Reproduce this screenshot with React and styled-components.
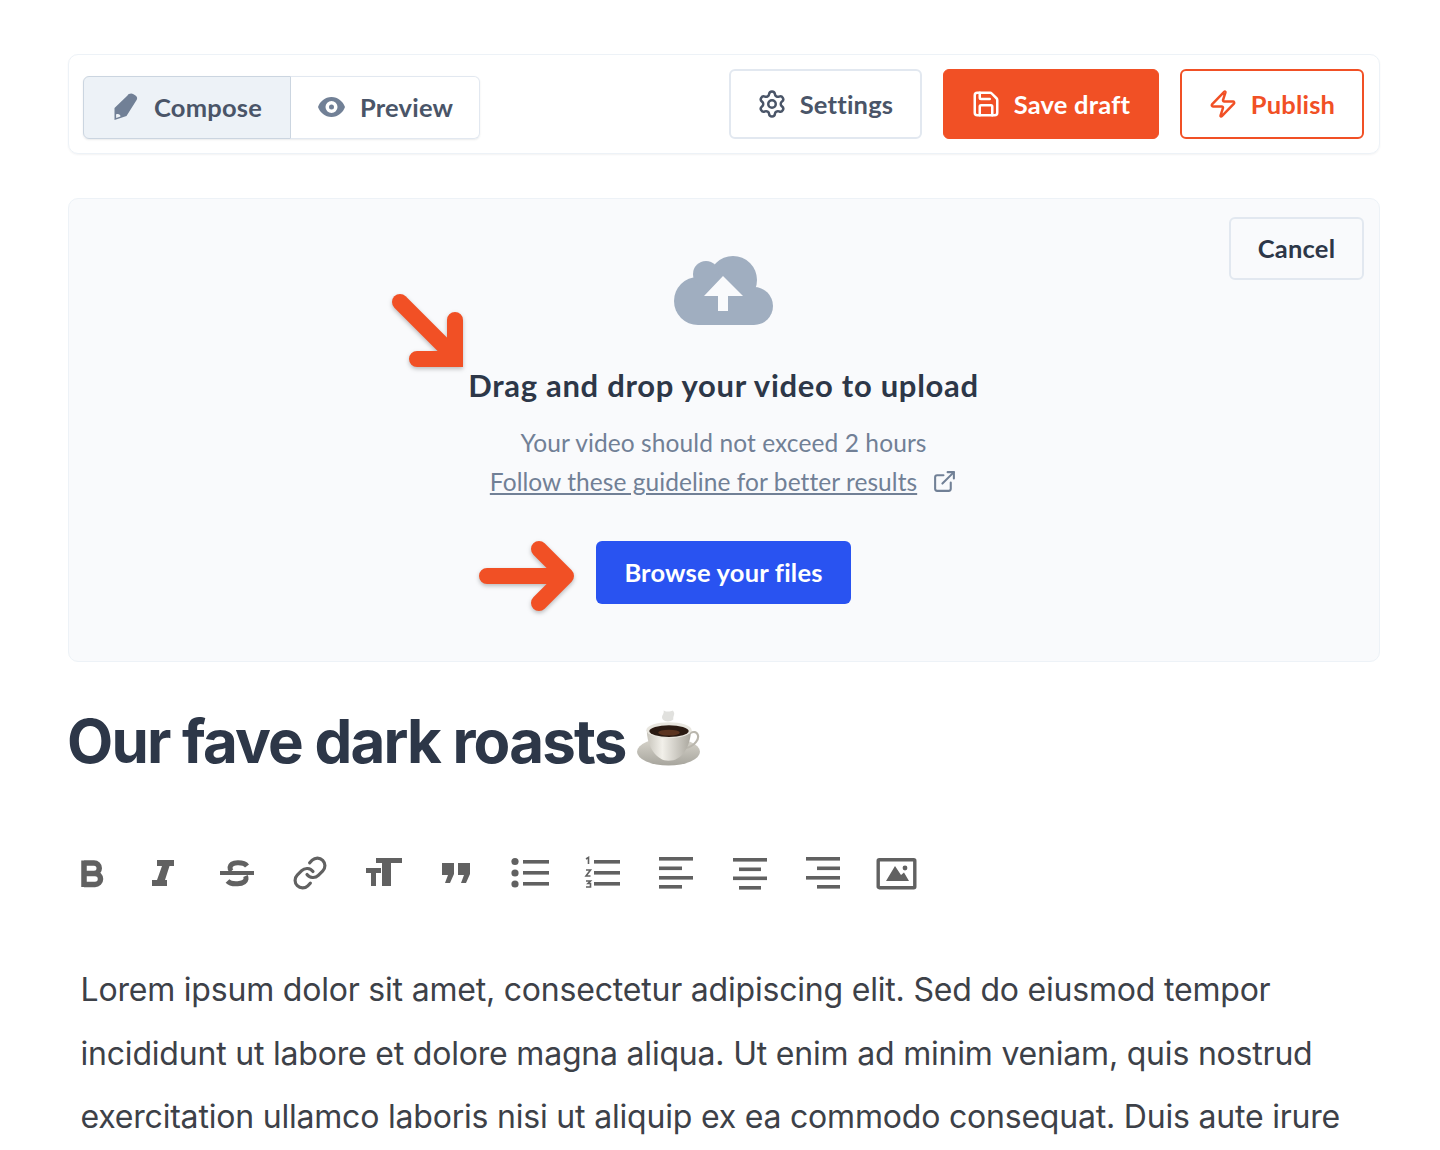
import React from "react";
import styled, { createGlobalStyle } from "styled-components";
import { Settings, Save, Zap, ExternalLink, Link as LinkIcon } from "lucide-react";

const ui = `Lato, "Liberation Sans", sans-serif`;

const Global = createGlobalStyle`
  html, body { margin: 0; padding: 0; background: #fff; height: 1150px; overflow: hidden; }
  * { box-sizing: border-box; }
  #root { height: 1150px; overflow: hidden; padding: 54px 60px 0 68px; font-family: ${ui}; font-variant-ligatures: none; }
  button { font-variant-ligatures: none; }
`;

const Bar = styled.header`
  height: 100px;
  padding: 0 15px 14px 14px;
  display: flex;
  align-items: flex-end;
  justify-content: space-between;
  border: 1px solid #edf2f7;
  border-radius: 10px;
  box-shadow: 0 1px 2px rgba(45, 55, 72, 0.06);
`;

const Tabs = styled.div`
  display: flex;
  height: 63px;
  border-radius: 6px;
  box-shadow: 0 1px 2px rgba(45, 55, 72, 0.1);
`;

const Tab = styled.button`
  width: ${(p) => p.$w}px;
  display: flex;
  align-items: center;
  gap: ${(p) => p.$gap}px;
  padding: 0 0 2px ${(p) => p.$pad}px;
  font: 700 25.5px ${ui};
  letter-spacing: 0.2px;
  color: #4a5568;
  background: ${(p) => (p.$active ? "#edf2f7" : "#fff")};
  border: 1px solid ${(p) => (p.$active ? "#cbd5e0" : "#e2e8f0")};
  border-left-width: ${(p) => (p.$active ? 1 : 0)}px;
  border-radius: ${(p) => (p.$active ? "6px 0 0 6px" : "0 6px 6px 0")};
  svg { flex: none; }
`;

const Actions = styled.div`
  display: flex;
  gap: 21px;
`;

const Action = styled.button`
  width: ${(p) => p.$w}px;
  height: 70px;
  display: flex;
  align-items: center;
  justify-content: center;
  gap: 13px;
  padding: 0 1px 0 0;
  font: 700 25.5px ${ui};
  letter-spacing: 0.2px;
  border-radius: 6px;
  ${(p) =>
    p.$kind === "solid"
      ? "color:#fff;background:#f15025;border:1px solid #f15025;"
      : p.$kind === "outline"
      ? "color:#f15025;background:#fff;border:2px solid #f15025;"
      : "color:#4a5568;background:#fff;border:2px solid #e2e8f0;"}
`;

const Drop = styled.section`
  position: relative;
  margin-top: 44px;
  height: 464px;
  padding: 57px 1px 0 0;
  display: flex;
  flex-direction: column;
  align-items: center;
  background: #f9fafc;
  border: 1px solid #edf2f7;
  border-radius: 10px;
`;

const Cancel = styled.button`
  position: absolute;
  top: 18px;
  right: 15px;
  width: 135px;
  height: 63px;
  padding: 0 0 2px;
  font: 700 25.5px ${ui};
  letter-spacing: 0.2px;
  color: #2d3748;
  background: #f9fafc;
  border: 2px solid #e2e8f0;
  border-radius: 6px;
`;

const Cloud = styled.svg`
  display: block;
  width: 99px;
  height: 69px;
`;

const DropTitle = styled.h2`
  margin: 40px 0 0;
  font: 700 31px/40px ${ui};
  letter-spacing: 0.7px;
  color: #2d3748;
`;

const Hint = styled.p`
  margin: 18px 0 0;
  font: 400 24.5px/39px ${ui};
  letter-spacing: 0.1px;
  color: #718096;
`;

const GuideRow = styled.div`
  display: flex;
  align-items: center;
  gap: 15px;
  font: 400 24.5px/39px ${ui};
  letter-spacing: 0.06px;
  color: #718096;
  a { color: inherit; text-decoration: underline; }
`;

const Browse = styled.button`
  margin-top: 40px;
  width: 255px;
  height: 63px;
  padding: 0 0 2px;
  font: 700 25.5px ${ui};
  letter-spacing: 0.2px;
  color: #fff;
  background: #2953f1;
  border: 0;
  border-radius: 6px;
`;

const Pointer = styled.svg`
  position: absolute;
  left: ${(p) => p.$x}px;
  top: ${(p) => p.$y}px;
  overflow: visible;
  filter: drop-shadow(0 2px 2px rgba(0, 0, 0, 0.25));
`;

const Title = styled.h1`
  margin: 39px 0 0 -1px;
  display: flex;
  align-items: center;
  height: 80px;
  gap: 11px;
  font: 700 60px/80px Inter, sans-serif;
  letter-spacing: -1.8px;
  color: #2d3748;
`;

const Cup = styled.svg`
  display: block;
  width: 63px;
  height: 58px;
  margin-top: -6px;
`;

const Format = styled.div`
  margin-top: 74px;
  padding-left: 4px;
  display: flex;
  gap: 37.3px;
  height: 36px;
`;

const Glyph = styled.svg`
  display: block;
  flex: none;
  width: 36px;
  height: 36px;
  overflow: visible;
  fill: #616161;
  stroke: none;
`;

const Body = styled.p`
  margin: 67px 0 0;
  padding: 0 0 0 12.5px;
  font: 400 32px/63.5px Inter, sans-serif;
  letter-spacing: -0.2px;
  color: #3d4148;
  width: 1290px;
`;

const L = ({ d, w = 3.5 }) => <path d={d} fill="none" stroke="#616161" strokeWidth={w} />;

const icons = [
  <Glyph key="b" viewBox="0 0 36 36"><L w={5.5} d="M12 8 H22 a5.2 5.2 0 0 1 0 10.5 H12 M12 18.5 H23 a5.5 5.5 0 0 1 0 11 H12 M12 5.5 V32" /></Glyph>,
  <Glyph key="i" viewBox="0 0 36 36"><path d="M12 5 H29 V11 H24.5 L20 25 H22 V31 H7 V25 H12 L17 11 H12 Z" /></Glyph>,
  <Glyph key="s" viewBox="0 0 36 36"><L w={5} d="M28 11 C25 7 12 6 11 12.5 C10.8 14 11.5 15 12.5 16" /><L w={5} d="M8.5 26 C12 30 26 30 27 24 C27.2 22.5 27 22 26.5 21" /><rect x="1" y="16" width="34" height="4" /></Glyph>,
  <LinkIcon key="l" size={36} color="#616161" strokeWidth={2.1} style={{ flex: "none" }} />,
  <Glyph key="t" viewBox="0 0 36 36"><path d="M11 3 H37 V8 H26 V31 H17 V8 H11 Z" /><path d="M1 13 H16 V18 H11 V31 H6 V18 H1 Z" /></Glyph>,
  <Glyph key="q" viewBox="0 0 36 36"><path d="M4 8 H16 V19 L12 28 H7 L10 20 H4 Z" /><path d="M20 8 H32 V19 L28 28 H23 L26 20 H20 Z" /></Glyph>,
  <Glyph key="ul" viewBox="0 0 36 36"><circle cx="3" cy="6.5" r="3.6" /><circle cx="3" cy="18" r="3.6" /><circle cx="3" cy="29" r="3.6" /><rect x="11" y="5" width="26" height="3.6" /><rect x="11" y="16" width="26" height="3.6" /><rect x="11" y="27" width="26" height="3.6" /></Glyph>,
  <Glyph key="ol" viewBox="0 0 36 36"><L w={1.6} d="M1 4 L3.5 2.5 V9 M1 15 H5.5 L1 21 H5.5 M1 26 H5.5 L3 28.5 H5.5 V32 H1" /><rect x="9" y="5" width="26" height="3.6" /><rect x="9" y="16" width="26" height="3.6" /><rect x="9" y="27" width="26" height="3.6" /></Glyph>,
  <Glyph key="al" viewBox="0 0 36 36"><rect x="1" y="2" width="34" height="3.6" /><rect x="1" y="11.5" width="23" height="3.6" /><rect x="1" y="21" width="34" height="3.6" /><rect x="1" y="30" width="23" height="3.6" /></Glyph>,
  <Glyph key="ac" viewBox="0 0 36 36"><rect x="1" y="3" width="34" height="3.6" /><rect x="7" y="12.5" width="22" height="3.6" /><rect x="1" y="21.5" width="34" height="3.6" /><rect x="7" y="31" width="22" height="3.6" /></Glyph>,
  <Glyph key="ar" viewBox="0 0 36 36"><rect x="1" y="2" width="34" height="3.6" /><rect x="12" y="11.5" width="23" height="3.6" /><rect x="1" y="21" width="34" height="3.6" /><rect x="12" y="30" width="23" height="3.6" /></Glyph>,
  <Glyph key="im" viewBox="0 0 36 36"><rect x="0.2" y="4.7" width="36.6" height="28" rx="1" fill="none" stroke="#616161" strokeWidth="3.4" /><path d="M8 26 L17 11 L23 20 L26 17.5 L31 26 Z" /><circle cx="27" cy="13" r="2.4" /></Glyph>,
];

export default function App() {
  return (
    <>
      <Global />
      <Bar>
        <Tabs>
          <Tab $active $w={208} $pad={29} $gap={16}>
            <svg width="25" height="27" viewBox="0 0 25 27"><path d="M14.5 2.5 C15.5 0.6 18.5 0 20.5 1.2 L22.5 2.4 C24.2 3.4 24.6 5.5 23.6 7 L13.5 23 L1.5 27 L1.5 15 Z" fill="#718096" /><path d="M3 21.5 L3.2 25 L7.5 23.5 C7.6 21.5 5 20.3 3 21.5 Z" fill="#edf2f7" /></svg>
            Compose
          </Tab>
          <Tab $w={189} $pad={27} $gap={15}>
            <svg width="27" height="20" viewBox="0 0 27 20"><path fillRule="evenodd" d="M13.5 0 C20 0 25 4.5 27 10 C25 15.5 20 20 13.5 20 C7 20 2 15.5 0 10 C2 4.5 7 0 13.5 0 Z M13.5 4 a6 6 0 1 0 0 12 a6 6 0 1 0 0-12 Z M13.5 7.5 a2.5 2.5 0 1 1 0 5 a2.5 2.5 0 1 1 0-5 Z" fill="#718096" /></svg>
            Preview
          </Tab>
        </Tabs>
        <Actions>
          <Action $w={193}><Settings size={30} strokeWidth={2} />Settings</Action>
          <Action $w={216} $kind="solid"><Save size={30} strokeWidth={2} />Save draft</Action>
          <Action $w={184} $kind="outline"><Zap size={30} strokeWidth={2} />Publish</Action>
        </Actions>
      </Bar>

      <Drop>
        <Cancel>Cancel</Cancel>
        <Pointer $x={318} $y={92} width="80" height="80" viewBox="0 0 80 80">
          <path d="M13 11 L66 64" fill="none" stroke="#f15025" strokeWidth="16" strokeLinecap="round" />
          <path d="M68 29 V68 H30" fill="none" stroke="#f15025" strokeWidth="16" strokeLinecap="round" strokeLinejoin="miter" />
        </Pointer>
        <Pointer $x={408} $y={340} width="100" height="76" viewBox="0 0 100 76">
          <path d="M10 37 H86 M62 10 L89 37 L62 64" fill="none" stroke="#f15025" strokeWidth="16" strokeLinecap="round" strokeLinejoin="round" />
        </Pointer>
        <Cloud viewBox="0 0 99 69">
          <g fill="#a0aec0">
            <circle cx="24" cy="45" r="24" />
            <circle cx="80" cy="50" r="19" />
            <circle cx="59" cy="24" r="24" />
            <circle cx="32" cy="18" r="13" />
            <rect x="24" y="25" width="56" height="44" />
          </g>
          <path d="M49 20 L69 40 H54 V55 H44 V40 H30 Z" fill="#f9fafc" />
        </Cloud>
        <DropTitle>Drag and drop your video to upload</DropTitle>
        <Hint>Your video should not exceed 2 hours</Hint>
        <GuideRow>
          <a>Follow these guideline for better results</a>
          <ExternalLink size={25} strokeWidth={2} />
        </GuideRow>
        <Browse>Browse your files</Browse>
      </Drop>

      <Title>
        Our fave dark roasts
        <Cup viewBox="0 0 64 58">
          <defs>
            <linearGradient id="cupBody" x1="0" x2="1" y1="0" y2="0">
              <stop offset="0" stopColor="#c8c5bc" />
              <stop offset="0.35" stopColor="#f2f0ea" />
              <stop offset="1" stopColor="#a9a69d" />
            </linearGradient>
            <linearGradient id="saucer" x1="0" x2="0" y1="0" y2="1">
              <stop offset="0" stopColor="#d9d6cd" />
              <stop offset="1" stopColor="#a7a59d" />
            </linearGradient>
          </defs>
          <ellipse cx="32" cy="43" rx="32" ry="14" fill="url(#saucer)" />
          <path d="M54 24 C62 20 64 28 60 33 C57 37 52 39 49 39" fill="none" stroke="#b9b6ad" strokeWidth="2.2" />
          <path d="M10 21 C10 38 20 52 32 52 C46 52 54 38 55 21 Z" fill="url(#cupBody)" />
          <ellipse cx="32.5" cy="21" rx="23" ry="8" fill="#e8e6df" />
          <ellipse cx="32.5" cy="22" rx="20" ry="6" fill="#2a1a12" />
          <ellipse cx="32.5" cy="23.5" rx="11" ry="3" fill="#5b3420" />
          <path d="M26 10 C24 6 28 5 27 1 C31 3 34 2 36 1 C40 4 36 7 37 10 C34 13 29 13 26 10 Z" fill="#d9d9d6" opacity="0.8" />
        </Cup>
      </Title>

      <Format>{icons}</Format>

      <Body>
        Lorem ipsum dolor sit amet, consectetur adipiscing elit. Sed do eiusmod tempor incididunt ut labore et dolore magna aliqua. Ut enim ad minim veniam, quis nostrud exercitation ullamco laboris nisi ut aliquip ex ea commodo consequat. Duis aute irure
      </Body>
    </>
  );
}
